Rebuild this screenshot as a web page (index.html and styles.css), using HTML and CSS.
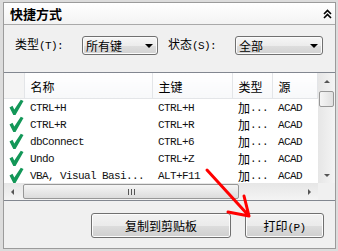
FILE: index.html
```html
<!DOCTYPE html>
<html lang="zh-CN">
<head>
    <meta charset="UTF-8">
    <title>快捷方式</title>
    <link rel="stylesheet" href="styles.css">
</head>
<body>
    <div class="panel">
        <div class="titlebar">
            <span class="title">快捷方式</span>
            <svg class="collapse" width="9" height="10" viewBox="0 0 9 10">
                <path d="M1 5 L4.5 1.5 L8 5 M1 9 L4.5 5.5 L8 9" fill="none" stroke="#000" stroke-width="1.6"/>
            </svg>
        </div>
        <div class="filters">
            <span class="lbl">类型<span class="m">(T):</span></span>
            <div class="combo combo-type"><span>所有键</span><i class="caret"></i></div>
            <span class="lbl lbl-state">状态<span class="m">(S):</span></span>
            <div class="combo combo-state"><span>全部</span><i class="caret"></i></div>
        </div>
        <div class="list">
            <div class="list-main">
                <div class="grid">
                    <table>
                        <colgroup>
                            <col class="c-chk"><col class="c-name"><col class="c-key"><col class="c-type"><col>
                        </colgroup>
                        <thead>
                            <tr>
                                <th></th>
                                <th>名称</th>
                                <th>主键</th>
                                <th>类型</th>
                                <th>源</th>
                            </tr>
                        </thead>
                        <tbody>
                            <tr>
                                <td class="chk"><svg width="20" height="17" viewBox="0 0 20 17"><path d="M5.5 8.5 L8.5 6.8 L10.3 10.6 L16.8 0.8 L19.5 2 L11.5 16 L9.3 16 Z" fill="#139758"/></svg></td>
                                <td><span class="m">CTRL+H</span></td><td><span class="m">CTRL+H</span></td><td>加<span class="m">...</span></td><td><span class="m">ACAD</span></td>
                            </tr>
                            <tr>
                                <td class="chk"><svg width="20" height="17" viewBox="0 0 20 17"><path d="M5.5 8.5 L8.5 6.8 L10.3 10.6 L16.8 0.8 L19.5 2 L11.5 16 L9.3 16 Z" fill="#139758"/></svg></td>
                                <td><span class="m">CTRL+R</span></td><td><span class="m">CTRL+R</span></td><td>加<span class="m">...</span></td><td><span class="m">ACAD</span></td>
                            </tr>
                            <tr>
                                <td class="chk"><svg width="20" height="17" viewBox="0 0 20 17"><path d="M5.5 8.5 L8.5 6.8 L10.3 10.6 L16.8 0.8 L19.5 2 L11.5 16 L9.3 16 Z" fill="#139758"/></svg></td>
                                <td><span class="m">dbConnect</span></td><td><span class="m">CTRL+6</span></td><td>加<span class="m">...</span></td><td><span class="m">ACAD</span></td>
                            </tr>
                            <tr>
                                <td class="chk"><svg width="20" height="17" viewBox="0 0 20 17"><path d="M5.5 8.5 L8.5 6.8 L10.3 10.6 L16.8 0.8 L19.5 2 L11.5 16 L9.3 16 Z" fill="#139758"/></svg></td>
                                <td><span class="m">Undo</span></td><td><span class="m">CTRL+Z</span></td><td>加<span class="m">...</span></td><td><span class="m">ACAD</span></td>
                            </tr>
                            <tr>
                                <td class="chk"><svg width="20" height="17" viewBox="0 0 20 17"><path d="M5.5 8.5 L8.5 6.8 L10.3 10.6 L16.8 0.8 L19.5 2 L11.5 16 L9.3 16 Z" fill="#139758"/></svg></td>
                                <td><span class="m">VBA, Visual Basi...</span></td><td><span class="m">ALT+F11</span></td><td>加<span class="m">...</span></td><td><span class="m">ACAD</span></td>
                            </tr>
                        </tbody>
                    </table>
                </div>
                <div class="vscroll">
                    <div class="sb-btn"><i class="tri tri-up"></i></div>
                    <div class="vthumb"></div>
                    <div class="sb-track"></div>
                    <div class="sb-btn"><i class="tri tri-down"></i></div>
                </div>
            </div>
            <div class="hscroll-row">
                <div class="hscroll">
                    <div class="sb-btn-h"><i class="tri tri-left"></i></div>
                    <div class="hthumb"><span class="grip"></span></div>
                    <div class="sb-track"></div>
                    <div class="sb-btn-h"><i class="tri tri-right"></i></div>
                </div>
                <div class="corner"></div>
            </div>
        </div>
        <div class="footer">
            <button class="btn btn-copy">复制到剪贴板</button>
            <button class="btn btn-print">打印<span class="m">(P)</span></button>
        </div>
    </div>
    <!-- red callout arrow drawn over the dialog -->
    <svg class="annot" width="338" height="251" viewBox="0 0 338 251">
        <path d="M207 170 L249 216 M249 216 L228 212 M249 216 L244 196" fill="none" stroke="#ff0000" stroke-width="3" stroke-linecap="round" stroke-linejoin="round"/>
    </svg>
</body>
</html>
```

FILE: styles.css
```css
body {
    margin: 0;
    width: 338px;
    height: 251px;
    position: relative;
    overflow: hidden;
    background: #dcdcdc;
    font-family: "Noto Sans CJK SC", sans-serif;
    font-size: 12px;
    color: #000;
}
.m {
    font-family: "Liberation Mono", "Noto Sans CJK SC", monospace;
    font-size: 11px;
    letter-spacing: -0.6px;
}
.panel {
    margin: 2px 2px 0 3px;
    height: 247px;
    box-sizing: border-box;
    border: 1px solid #9b9b9b;
    background: #f0f0f0;
    display: flex;
    flex-direction: column;
}
.titlebar {
    height: 21px;
    flex: none;
    border-bottom: 1px solid #a9a9a9;
    background: linear-gradient(#ffffff, #f3f3f3);
    display: flex;
    align-items: center;
    justify-content: space-between;
    padding: 0 3px 0 6px;
}
.title {
    font-weight: bold;
    font-size: 13px;
    line-height: 21px;
}

/* filter row */
.filters {
    height: 47px;
    flex: none;
    box-sizing: border-box;
    padding: 11px 0 0 11px;
    display: flex;
    align-items: flex-start;
}
.lbl {
    width: 67px;
    line-height: 16px;
}
.lbl-state {
    margin-left: 10px;
}
.combo {
    height: 19px;
    box-sizing: border-box;
    border: 1px solid #707070;
    border-radius: 3px;
    background: linear-gradient(#f6f6f6 0%, #ececec 50%, #dedede 51%, #d2d2d2 100%);
    box-shadow: inset 0 0 0 1px #fbfbfb;
    display: flex;
    align-items: center;
    justify-content: space-between;
    padding: 0 4px 0 3px;
    line-height: 17px;
}
.combo-type {
    width: 76px;
}
.combo-state {
    width: 88px;
}
.caret {
    width: 0;
    height: 0;
    border-left: 4px solid transparent;
    border-right: 4px solid transparent;
    border-top: 4px solid #000;
}

/* list view */
.list {
    flex: none;
    border-top: 1px solid #828790;
    border-bottom: 1px solid #828790;
    background: #fff;
}
.list-main {
    display: flex;
    height: 110px;
}
.grid {
    flex: 1;
    overflow: hidden;
}
table {
    width: 100%;
    border-collapse: collapse;
    table-layout: fixed;
}
.c-chk { width: 20px; }
.c-name { width: 128px; }
.c-key { width: 80px; }
.c-type { width: 40px; }
th {
    height: 24px;
    padding: 1px 0 0 6px;
    font-weight: normal;
    text-align: left;
    background: linear-gradient(#ffffff, #f7f8fa);
    border-right: 1px solid #e3e5e8;
    border-bottom: 1px solid #e3e5e8;
}
th:first-child {
    background: #f4f4f4;
}
td {
    height: 17px;
    padding: 0 0 0 6px;
    white-space: nowrap;
    overflow: hidden;
    line-height: 17px;
    vertical-align: top;
}
td .m {
    display: inline-block;
    vertical-align: top;
    line-height: 16px;
    padding-top: 1px;
    color: #111;
}
td.chk {
    padding: 0;
}
td.chk svg {
    display: block;
}

/* scrollbars */
.vscroll {
    width: 17px;
    display: flex;
    flex-direction: column;
    background: linear-gradient(90deg, #e6e6e6, #f4f4f4);
}
.sb-btn {
    height: 16px;
    display: flex;
    align-items: center;
    justify-content: center;
}
.sb-track {
    flex: 1;
}
.vthumb {
    height: 16px;
    margin: 2px 1px 0 1px;
    box-sizing: border-box;
    border: 1px solid #979797;
    border-radius: 2px;
    background: linear-gradient(90deg, #f5f5f5, #e0e0e0);
}
.hscroll-row {
    display: flex;
    height: 17px;
}
.hscroll {
    flex: 1;
    display: flex;
    align-items: center;
    background: linear-gradient(#e6e6e6, #f4f4f4);
}
.sb-btn-h {
    width: 17px;
    height: 17px;
    display: flex;
    align-items: center;
    justify-content: center;
}
.hthumb {
    width: 216px;
    height: 15px;
    margin-left: 2px;
    box-sizing: border-box;
    border: 1px solid #979797;
    border-radius: 2px;
    background: linear-gradient(#f5f5f5, #dcdcdc);
    display: flex;
    align-items: center;
    justify-content: center;
}
.grip {
    width: 7px;
    height: 6px;
    background: repeating-linear-gradient(90deg, #555 0 1px, transparent 1px 3px);
}
.corner {
    width: 17px;
    background: #f0f0f0;
}
.tri {
    width: 0;
    height: 0;
}
.tri-up {
    border-left: 3px solid transparent;
    border-right: 3px solid transparent;
    border-bottom: 3px solid #555;
}
.tri-down {
    border-left: 3px solid transparent;
    border-right: 3px solid transparent;
    border-top: 3px solid #555;
}
.tri-left {
    border-top: 3px solid transparent;
    border-bottom: 3px solid transparent;
    border-right: 3px solid #555;
}
.tri-right {
    border-top: 3px solid transparent;
    border-bottom: 3px solid transparent;
    border-left: 3px solid #555;
}

/* buttons */
.footer {
    flex: 1;
    display: flex;
    justify-content: flex-end;
    align-items: flex-start;
    gap: 14px;
    padding: 12px 11px 0 0;
}
.btn {
    height: 25px;
    box-sizing: border-box;
    border: 1px solid #707070;
    border-radius: 3px;
    background: linear-gradient(#f2f2f2 0%, #ebebeb 50%, #dddddd 51%, #cfcfcf 100%);
    box-shadow: inset 0 0 0 1px #fcfcfc;
    font-family: "Noto Sans CJK SC", sans-serif;
    font-size: 12px;
    color: #000;
    padding: 0;
}
.btn-copy {
    width: 140px;
}
.btn-print {
    width: 79px;
}
.annot {
    position: absolute;
    left: 0;
    top: 0;
    pointer-events: none;
}
```
